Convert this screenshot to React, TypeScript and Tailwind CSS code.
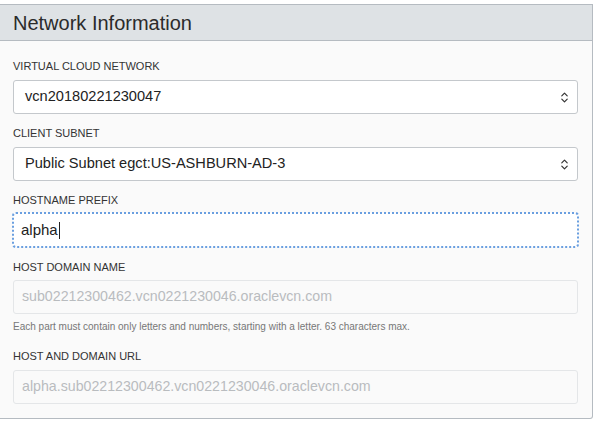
import { ChevronsUpDown } from "lucide-react";

const font = { fontFamily: '"Liberation Sans", Arial, sans-serif' };

function Label({ children }: { children: string }) {
  return (
    <div className="h-[14px] text-[11px] leading-[14px] text-[#333] uppercase">
      {children}
    </div>
  );
}

function SelectBox({ value }: { value: string }) {
  return (
    <div className="flex h-[34px] items-center justify-between rounded-[3px] border border-[#c4c8cc] bg-white pl-[11px] pr-[6px] text-[14.6px] text-[#222]">
      <span>{value}</span>
      <ChevronsUpDown className="h-[13px] w-[13px] text-[#333]" strokeWidth={2.2} />
    </div>
  );
}

function DisabledInput({ value }: { value: string }) {
  return (
    <div className="flex h-[34px] items-center rounded-[3px] border border-[#e4e6e8] bg-[#fafafa] pl-[8px] text-[14.2px] text-[#b9bcbf]">
      {value}
    </div>
  );
}

export default function App() {
  return (
    <div className="h-[423px] w-[597px] bg-white pt-[4px]" style={font}>
      <div className="w-[593px] rounded-br-[3px] border border-l-0 border-[#b5bbc1] bg-[#fafafa]">
        {/* Header */}
        <div className="flex h-[36px] items-center border-b border-[#b5bbc1] bg-[#dee2e5] pl-[13px] text-[20px] text-[#2b2b2b]">
          Network Information
        </div>

        <div className="pb-[14px] pl-[13px] pr-[14px] pt-[18px]">
          <Label>Virtual Cloud Network</Label>
          <div className="mt-[7px]">
            <SelectBox value="vcn20180221230047" />
          </div>

          <div className="mt-[12px]">
            <Label>Client Subnet</Label>
          </div>
          <div className="mt-[7px]">
            <SelectBox value="Public Subnet egct:US-ASHBURN-AD-3" />
          </div>

          <div className="mt-[12px]">
            <Label>Hostname Prefix</Label>
          </div>
          <div className="mt-[6px] flex h-[34px] items-center rounded-[3px] bg-white pl-[8px] text-[15px] text-[#222] outline-dotted outline-[2px] -outline-offset-1 outline-[#6a9fe0]">
            alpha
            <span className="ml-[1px] inline-block h-[17px] w-[1px] bg-[#222]" />
          </div>

          <div className="mt-[13px]">
            <Label>Host Domain Name</Label>
          </div>
          <div className="mt-[6px]">
            <DisabledInput value="sub02212300462.vcn0221230046.oraclevcn.com" />
          </div>
          <div className="mt-[7px] text-[10px] leading-[12px] text-[#777]">
            Each part must contain only letters and numbers, starting with a letter. 63 characters max.
          </div>

          <div className="mt-[16px]">
            <Label>Host and Domain URL</Label>
          </div>
          <div className="mt-[7px]">
            <DisabledInput value="alpha.sub02212300462.vcn0221230046.oraclevcn.com" />
          </div>
        </div>
      </div>
    </div>
  );
}
